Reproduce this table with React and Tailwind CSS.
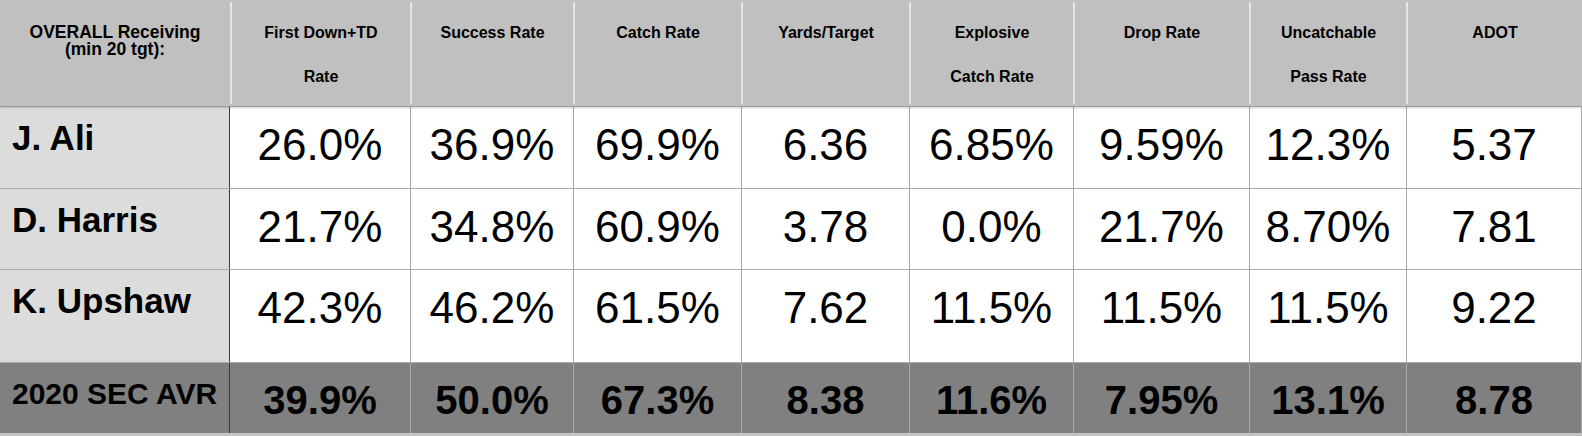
import React from "react";

const cols = "grid grid-cols-[230px_180px_163px_168px_168px_164px_176px_157px_176px]";

const headers = [
  ["First Down+TD", "Rate"],
  ["Success Rate"],
  ["Catch Rate"],
  ["Yards/Target"],
  ["Explosive", "Catch Rate"],
  ["Drop Rate"],
  ["Uncatchable", "Pass Rate"],
  ["ADOT"],
];

const players = [
  { name: "J. Ali", h: "h-[82px]", stats: ["26.0%", "36.9%", "69.9%", "6.36", "6.85%", "9.59%", "12.3%", "5.37"] },
  { name: "D. Harris", h: "h-[81px]", stats: ["21.7%", "34.8%", "60.9%", "3.78", "0.0%", "21.7%", "8.70%", "7.81"] },
  { name: "K. Upshaw", h: "h-[93px]", stats: ["42.3%", "46.2%", "61.5%", "7.62", "11.5%", "11.5%", "11.5%", "9.22"] },
];

const average = ["39.9%", "50.0%", "67.3%", "8.38", "11.6%", "7.95%", "13.1%", "8.78"];

export default function App() {
  return (
    <div className="w-[1582px] h-[436px] overflow-hidden bg-white text-black font-['Liberation_Sans',Arial,sans-serif]">
      {/* header */}
      <div className={`${cols} relative z-10 h-[107px] py-[2px] bg-[#c0c0c0] border-b border-[#9b9b9b] shadow-[0_1px_2px_rgba(0,0,0,0.18)]`}>
        <div className="flex flex-col items-center pt-[22px] text-[17.5px] leading-[17px] font-bold">
          <span>OVERALL Receiving</span>
          <span>(min 20 tgt):</span>
        </div>
        {headers.map((lines, i) => (
          <div
            key={i}
            className="flex flex-col items-center pt-[9px] border-l-2 border-[#e4e4e4] text-[16px] leading-[44px] font-bold"
          >
            {lines.map((l) => (
              <span key={l}>{l}</span>
            ))}
          </div>
        ))}
      </div>

      {/* player rows */}
      {players.map((p) => (
        <div key={p.name} className={`${cols} ${p.h} border-b border-[#a9a9a9]`}>
          <div className="bg-[#dcdcdc] border-r border-[#3a3a3a] pl-[12px] pt-[14px] text-[35px] leading-[34px] font-bold whitespace-nowrap">
            {p.name}
          </div>
          {p.stats.map((s, i) => (
            <div
              key={i}
              className={`flex justify-center pt-[16px] text-[44px] leading-[44px] ${i > 0 ? "border-l border-[#a9a9a9]" : ""} ${i === 7 ? "border-r border-[#a9a9a9]" : ""}`}
            >
              {s}
            </div>
          ))}
        </div>
      ))}

      {/* SEC average */}
      <div className={`${cols} h-[70px] bg-[#808080]`}>
        <div className="border-r border-[#3a3a3a] pl-[12px] pt-[16px] text-[30px] leading-[30px] font-bold whitespace-nowrap">
          2020 SEC AVR
        </div>
        {average.map((s, i) => (
          <div
            key={i}
            className={`flex justify-center pt-[17px] text-[40px] leading-[40px] font-bold ${i > 0 ? "border-l border-[#a9a9a9]" : ""} ${i === 7 ? "border-r border-[#a9a9a9]" : ""}`}
          >
            {s}
          </div>
        ))}
      </div>
      <div className="h-[3px] bg-[#c4c4c4]" />
    </div>
  );
}
